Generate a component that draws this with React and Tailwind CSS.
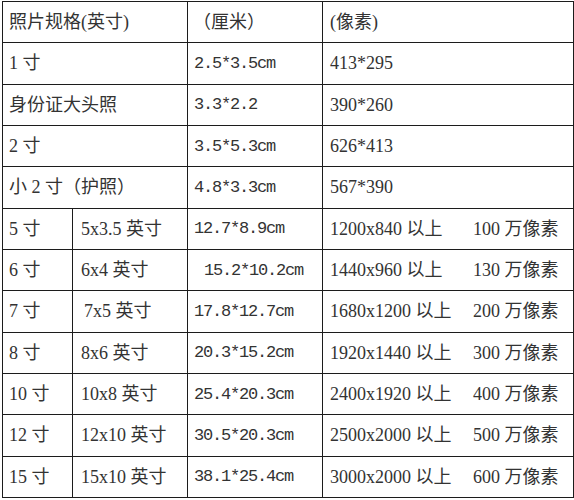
import React from "react";

const serif = "font-['Liberation_Serif','Noto_Sans_CJK_SC',serif]";
const mono = "font-['Liberation_Mono','Noto_Sans_CJK_SC',monospace]";

// rows for the sized prints: [inch name, inch size, cm, pixels, megapixels]
const sizedRows = [
  ["5 寸", "5x3.5 英寸", "12.7*8.9cm", "1200x840 以上", "100 万像素"],
  ["6 寸", "6x4 英寸", "15.2*10.2cm", "1440x960 以上", "130 万像素"],
  ["7 寸", "7x5 英寸", "17.8*12.7cm", "1680x1200 以上", "200 万像素"],
  ["8 寸", "8x6 英寸", "20.3*15.2cm", "1920x1440 以上", "300 万像素"],
  ["10 寸", "10x8 英寸", "25.4*20.3cm", "2400x1920 以上", "400 万像素"],
  ["12 寸", "12x10 英寸", "30.5*20.3cm", "2500x2000 以上", "500 万像素"],
  ["15 寸", "15x10 英寸", "38.1*25.4cm", "3000x2000 以上", "600 万像素"],
];

const idRows = [
  ["1 寸", "2.5*3.5cm", "413*295"],
  ["身份证大头照", "3.3*2.2", "390*260"],
  ["2 寸", "3.5*5.3cm", "626*413"],
  ["小 2 寸（护照）", "4.8*3.3cm", "567*390"],
];

const cell = "border border-[#1c1c1c] p-0 align-middle whitespace-nowrap";
const cmText = `${mono} text-[17px] tracking-[-1.2px]`;

export default function App() {
  return (
    <div className="w-[574px] h-[500px] bg-white pt-[1px] pl-[2px]">
      <table
        className={`border-collapse table-fixed w-[571px] h-[497px] text-[18px] leading-none text-[#333] ${serif}`}
      >
        <colgroup>
          <col className="w-[70px]" />
          <col className="w-[115px]" />
          <col className="w-[135px]" />
          <col className="w-[251px]" />
        </colgroup>
        <tbody>
          <tr>
            <td colSpan={2} className={`${cell} pl-[6px]`}>照片规格(英寸)</td>
            <td className={`${cell} pl-[5px]`}>（厘米）</td>
            <td className={`${cell} pl-[7px]`}>(像素)</td>
          </tr>

          {idRows.map(([name, cm, px]) => (
            <tr key={name}>
              <td colSpan={2} className={`${cell} pl-[6px]`}>{name}</td>
              <td className={`${cell} pl-[6px] ${cmText}`}>{cm}</td>
              <td className={`${cell} pl-[7px]`}>{px}</td>
            </tr>
          ))}

          {sizedRows.map(([name, inch, cm, px, mp], i) => (
            <tr key={name}>
              <td className={`${cell} pl-[6px]`}>{name}</td>
              <td className={`${cell} ${i === 2 ? "pl-[11px]" : "pl-[8px]"}`}>{inch}</td>
              <td className={`${cell} ${i === 1 ? "pl-[16px]" : "pl-[6px]"} ${cmText}`}>
                {cm}
              </td>
              <td className={`${cell} pl-[7px]`}>
                <span className="inline-block w-[143px]">{px}</span>
                <span>{mp}</span>
              </td>
            </tr>
          ))}
        </tbody>
      </table>
    </div>
  );
}
